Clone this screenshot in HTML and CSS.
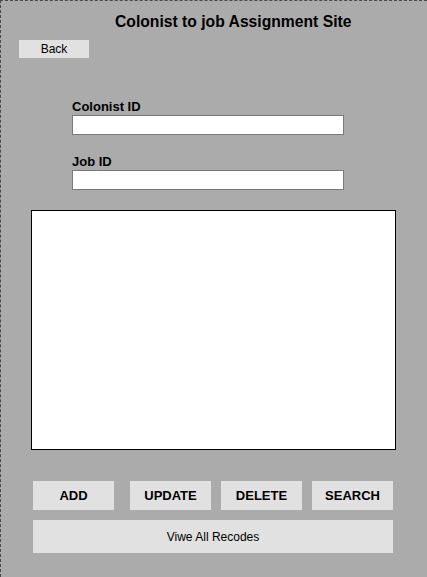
FILE: index.html
```html
<!DOCTYPE html>
<html>
<head>
<meta charset="utf-8">
<link rel="stylesheet" href="styles.css">
</head>
<body>
<div class="frame">
  <h1 class="title">Colonist to job Assignment Site</h1>
  <button class="btn back">Back</button>
  <div class="form">
    <label class="label">Colonist ID</label>
    <div class="input"></div>
    <label class="label label-job">Job ID</label>
    <div class="input"></div>
  </div>
  <div class="grid"></div>
  <div class="actions">
    <button class="btn action">ADD</button>
    <button class="btn action update">UPDATE</button>
    <button class="btn action">DELETE</button>
    <button class="btn action">SEARCH</button>
  </div>
  <button class="btn viewall">Viwe All Recodes</button>
</div>
</body>
</html>
```

FILE: styles.css
```css
html, body {
  margin: 0;
  padding: 0;
  background: #ababab;
}
.frame {
  box-sizing: border-box;
  width: 427px;
  height: 577px;
  border-top: 1px dashed #4a4a4a;
  border-left: 1px dashed #4a4a4a;
  background: #ababab;
  display: flex;
  flex-direction: column;
  align-items: flex-start;
  font-family: "Liberation Sans", Arial, sans-serif;
  color: #000;
}
.title {
  margin: 12px 0 0 114px;
  font-size: 15.7px;
  line-height: 18px;
  font-weight: bold;
}
.btn {
  border: none;
  background: #e1e1e1;
  font-family: "Liberation Sans", Arial, sans-serif;
  color: #000;
  padding: 0;
  margin: 0;
}
.back {
  margin: 9px 0 0 18px;
  width: 70px;
  height: 18px;
  font-size: 12px;
}
.form {
  margin: 41px 0 0 71px;
  display: flex;
  flex-direction: column;
}
.label {
  font-size: 13px;
  font-weight: bold;
  line-height: 16px;
}
.label-job {
  margin-top: 19px;
}
.input {
  box-sizing: border-box;
  margin-top: 0;
  width: 272px;
  height: 20px;
  background: #fff;
  border: 1px solid #7a7a7a;
}
.grid {
  box-sizing: border-box;
  margin: 20px 0 0 30px;
  width: 365px;
  height: 240px;
  background: #fff;
  border: 1px solid #000;
}
.actions {
  margin: 31px 0 0 32px;
  display: flex;
  gap: 10px;
}
.action {
  width: 81px;
  height: 29px;
  font-size: 13px;
  font-weight: bold;
}
.update {
  margin-left: 6px;
}
.viewall {
  margin: 10px 0 0 32px;
  width: 360px;
  height: 33px;
  font-size: 12px;
}
```
